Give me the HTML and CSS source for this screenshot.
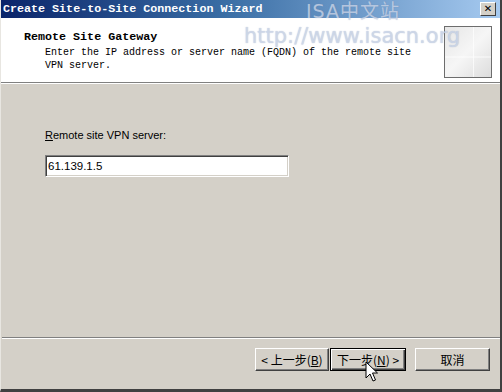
FILE: index.html
```html
<!DOCTYPE html>
<html lang="zh-CN">
<head>
  <meta charset="UTF-8" />
  <meta name="viewport" content="width=device-width, initial-scale=1.0" />
  <title>Create Site-to-Site Connection Wizard</title>
  <link rel="stylesheet" href="styles.css">
</head>
<body>
  <div class="window">
    <div class="titlebar">
      <span class="title">Create Site-to-Site Connection Wizard</span>
      <span class="close">&#x2715;</span>
    </div>
    <div class="header">
      <div class="header-text">
        <div class="heading">Remote Site Gateway</div>
        <div class="desc">Enter the IP address or server name (FQDN) of the remote site<br>VPN server.</div>
      </div>
      <div class="header-icon"></div>
    </div>
    <div class="content">
      <label class="field-label" for="server"><u>R</u>emote site VPN server:</label>
      <div class="field-input" id="server">61.139.1.5</div>
    </div>
    <div class="footer">
      <div class="btn">&lt; 上一步(<u>B</u>)</div>
      <div class="btn btn-default">下一步(<u>N</u>) &gt;</div>
      <div class="btn btn-cancel">取消</div>
    </div>

    <div class="watermark wm-1">ISA中文站</div>
    <div class="watermark wm-2">http://www.isacn.org</div>
    <svg class="cursor" width="14" height="22" viewBox="0 0 14 22">
      <path d="M1 1 L1 17 L5 13 L8 20 L10.5 19 L7.5 12 L12.5 12 Z" fill="#fff" stroke="#000" stroke-width="1"/>
    </svg>
  </div>
</body>
</html>
```

FILE: styles.css
```css
html, body {
  margin: 0;
  padding: 0;
}
body {
  width: 502px;
  height: 392px;
  overflow: hidden;
  background: #d4d0c8;
}
.window {
  position: relative;
  width: 502px;
  height: 392px;
  box-sizing: border-box;
  display: flex;
  flex-direction: column;
  background: #d4d0c8;
  border-left: 1px solid #e8e6e1;
  border-right: 2px solid #404040;
  border-bottom: 3px solid #404040;
}
.titlebar {
  height: 18px;
  flex: none;
  display: flex;
  align-items: center;
  justify-content: space-between;
  padding: 0 4px 0 2px;
  background: linear-gradient(to right, #0a246a 0%, #3a6ea5 45%, #a6caf0 100%);
}
.title {
  color: #fff;
  font-family: "Liberation Mono", monospace;
  font-weight: bold;
  font-size: 11.7px;
}
.close {
  width: 16px;
  height: 14px;
  box-sizing: border-box;
  background: #d4d0c8;
  border: 1px solid;
  border-color: #fff #404040 #404040 #fff;
  font-family: "DejaVu Sans", sans-serif;
  font-size: 10px;
  font-weight: bold;
  line-height: 12px;
  text-align: center;
  color: #000;
}
.header {
  height: 64px;
  flex: none;
  display: flex;
  justify-content: space-between;
  background: #fff;
  border-bottom: 1px solid #808080;
  box-shadow: 0 1px 0 #fff;
  font-family: "Liberation Mono", monospace;
  color: #000;
}
.header-text {
  padding: 12px 0 0 23px;
}
.heading {
  font-weight: bold;
  font-size: 11.7px;
  line-height: 14px;
}
.desc {
  padding-left: 21px;
  font-size: 10px;
  line-height: 13px;
  margin-top: 2px;
}
.header-icon {
  width: 48px;
  height: 52px;
  margin: 8px 8px 0 0;
  box-sizing: border-box;
  border: 1px solid #6d6d6d;
  background:
    linear-gradient(to right, transparent 60%, rgba(255,255,255,0.7) 62%, transparent 64%),
    linear-gradient(to bottom, transparent 58%, rgba(255,255,255,0.8) 60%, transparent 62%),
    linear-gradient(135deg, #e6e6e6 0%, #f6f6f6 50%, #dcdcdc 100%);
}
.content {
  flex: 1;
  margin-top: 1px;
  padding: 45px 0 0 44px;
  display: flex;
  flex-direction: column;
  align-items: flex-start;
  font-family: "Liberation Sans", Arial, sans-serif;
  font-size: 11px;
  color: #000;
}
.field-label {
  line-height: 13px;
}
.field-input {
  margin-top: 13px;
  width: 244px;
  height: 22px;
  box-sizing: border-box;
  padding: 3px 0 0 2px;
  background: #fff;
  border: 1px solid;
  border-color: #808080 #fff #fff #808080;
  box-shadow: inset 1px 1px 0 #404040, inset -1px -1px 0 #d4d0c8;
  font-size: 11.5px;
  line-height: 14px;
}
.footer {
  height: 41px;
  flex: none;
  display: flex;
  align-items: flex-start;
  padding: 10px 10px 0 253px;
  border-top: 1px solid #808080;
  box-shadow: inset 0 1px 0 #fff;
  margin: 0 0 0 1px;
}
.btn {
  width: 74px;
  height: 23px;
  box-sizing: border-box;
  display: flex;
  align-items: center;
  justify-content: center;
  background: #d4d0c8;
  border: 1px solid;
  border-color: #fff #404040 #404040 #fff;
  box-shadow: inset -1px -1px 0 #808080;
  font-family: "Noto Sans CJK SC", sans-serif;
  font-size: 12px;
  color: #000;
}
.btn-default {
  width: 76px;
  margin-left: 1px;
  border: 1px solid #000;
  box-shadow: inset 1px 1px 0 #fff, inset -1px -1px 0 #404040, inset -2px -2px 0 #808080;
}
.btn-cancel {
  width: 75px;
  margin-left: 9px;
}
.watermark {
  position: absolute;
  font-family: "DejaVu Sans", "Noto Sans CJK SC", sans-serif;
  color: rgba(215, 224, 240, 0.7);
  text-shadow: 0 0 1px rgba(110, 130, 170, 0.55);
  pointer-events: none;
  white-space: nowrap;
}
.wm-1 {
  left: 305px;
  top: 0;
  font-size: 19px;
  line-height: 22px;
  letter-spacing: 1px;
}
.wm-2 {
  left: 243px;
  top: 23px;
  font-size: 21px;
  line-height: 26px;
}
.cursor {
  position: absolute;
  left: 364px;
  top: 361px;
}
```
